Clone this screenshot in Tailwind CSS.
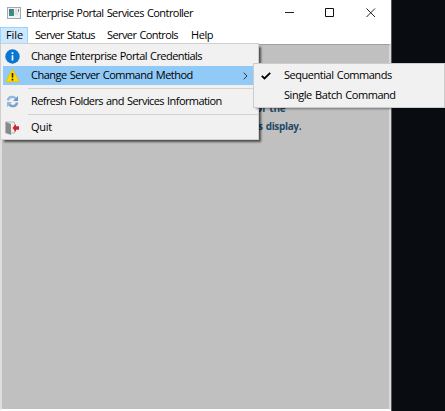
<!DOCTYPE html>
<html lang="en">
<head>
<meta charset="utf-8">
<title>Enterprise Portal Services Controller</title>
<script src="https://cdn.jsdelivr.net/npm/@tailwindcss/browser@4"></script>
</head>
<body class="w-[445px] h-[411px] overflow-hidden bg-[#090d11] font-['Open_Sans','Noto_Sans',sans-serif] text-[11px] text-black whitespace-nowrap [word-spacing:0.8px]">
<div class="relative w-[445px] h-[411px]">
  <main class="flex flex-col w-[392px] h-[411px] bg-white border-r border-[#55585b]">
    <header class="flex h-[26px] items-center pl-[7px]">
      <svg class="w-[14px] h-[12px] shrink-0" viewBox="0 0 14 12"><rect x=".5" y=".5" width="13" height="11" fill="#f1f3f3" stroke="#a5a9ac"/><rect x="2" y="2" width="5" height="7" fill="#3e8f78"/><path d="M2 2h3v3H2z" fill="#4777a4"/><path d="M8 3h2M8 5h2M8 7h3" stroke="#c5cacd"/><path d="M11 2h1v3h-1z" fill="#6986a5"/></svg>
      <h1 class="ml-[5px] w-[257px] tracking-[-0.56px]">Enterprise Portal Services Controller</h1>
      <div class="flex items-center gap-[30px] ml-[2px]">
        <svg class="w-[10px] h-[10px]" viewBox="0 0 10 10"><path d="M0 4.5h9" stroke="#222"/></svg>
        <svg class="w-[10px] h-[10px]" viewBox="0 0 10 10"><path d="M.5.5h8v8h-8z" fill="none" stroke="#111"/></svg>
        <svg class="w-[10px] h-[10px] ml-[1px]" viewBox="0 0 10 10"><path d="M.5.5l8.500 8.500M9 .5L.5 9" stroke="#222"/></svg>
      </div>
    </header>
    <nav class="flex h-[18px] items-center">
      <span class="flex items-center w-[28px] h-[17px] pl-[5px] bg-[#cce8ff] border border-[#99d1ff] tracking-[-0.1px]">File</span>
      <span class="ml-[7px] w-[72px] tracking-[-0.66px]">Server Status</span>
      <span class="w-[84px] tracking-[-0.59px]">Server Controls</span>
      <span class="tracking-[-0.4px]">Help</span>
    </nav>
    <section class="grow bg-[#c0c0c0] border-x-2 border-b-[1px] border-t border-l-[#dedede] border-r-[#dadada] border-b-[#ffffff] border-t-[#a0a0a0] mb-[1px]">
      <div class="pl-[251px] pt-[54px] font-bold text-[#1f4967] leading-[18px] text-[10px]">
        <p class="pl-[3px] tracking-[-0.1px]">of the</p>
        <p class="pl-[5px] tracking-[-0.35px]">s display.</p>
      </div>
    </section>
  </main>

  <div class="absolute left-0 top-[43px] w-[259px] h-[97px] bg-[#f1f1f1] border border-[#cfcfcf] shadow-[3px_3px_2px_-1px_rgba(0,0,0,0.6)] pt-[3px] pl-px">
    <div class="flex items-center h-[19px] pl-[3px]">
      <svg class="w-[15px] h-[15px]" viewBox="0 0 15 15"><circle cx="7.500" cy="7.500" r="7.200" fill="#0877d1"/><path d="M7.500 6.300v5.200M7.500 3.200v1.900" stroke="#fff" stroke-width="1.700"/></svg>
      <span class="ml-[11px] tracking-[-0.56px]">Change Enterprise Portal Credentials</span>
    </div>
    <div class="flex items-center h-[19px] ml-px pl-[2px] bg-[#91c9f7]">
      <svg class="w-[15px] h-[15px]" viewBox="0 0 15 15"><path d="M7.500 1L14.200 13.700H.8z" fill="#fd0" stroke="#f2bd00" stroke-width=".8" stroke-linejoin="round"/><path d="M7.500 5v4.500M7.500 10.700v1.700" stroke="#222" stroke-width="1.600"/></svg>
      <span class="ml-[11px] w-[212px] tracking-[-0.51px]">Change Server Command Method</span>
      <svg class="w-[5px] h-[8px]" viewBox="0 0 5 8"><path d="M.7.700L4 4 .7 7.300" fill="none" stroke="#333"/></svg>
    </div>
    <div class="h-px mt-[3px] ml-[26px] bg-[#d2d2d2]"></div>
    <div class="flex items-center h-[19px] mt-[3px] pl-[4px]">
      <svg class="w-[13px] h-[13px]" viewBox="0 0 13 13" fill="none" stroke="#85a9d3" stroke-width="2.400"><path d="M2 5.500C2.500 1.500 7 .9 10 3.500" stroke="#92b8e0"/><path d="M11 7.500C10.500 11.500 6 12.100 3 9.500" stroke="#7d9fc8"/><path d="M12 1v5H7z" fill="#6d97ca" stroke="none"/><path d="M1 12V7H6z" fill="#92b8e0" stroke="none"/></svg>
      <span class="ml-[12px] tracking-[-0.58px]">Refresh Folders and Services Information</span>
    </div>
    <div class="h-px mt-[3px] ml-[26px] bg-[#d2d2d2]"></div>
    <div class="flex items-center h-[19px] mt-[3px] pl-[3px]">
      <svg class="w-[15px] h-[14px]" viewBox="0 0 15 14"><path d="M.5 1h9v11h-9z" fill="#ededed" stroke="#b5b5b5"/><path d="M1 1l5 2v11l-5-2z" fill="#8a8a8a"/><path d="M7.500 7L11 3v2.200h3v3.600h-3V11z" fill="#d51f29"/></svg>
      <span class="ml-[11px] tracking-[-0.3px]">Quit</span>
    </div>
  </div>

  <div class="absolute left-[253px] top-[63px] w-[192px] h-[45px] bg-[#f1f1f1] border border-[#cccccc] shadow-[2px_2px_2px_-1px_rgba(0,0,0,0.4)] pt-[2px]">
    <div class="flex items-center h-[19px] pl-[7px]">
      <svg class="w-[10px] h-[8px]" viewBox="0 0 10 8"><path d="M.8 3.800L3.500 6.500 9.200.8" fill="none" stroke="#000" stroke-width="1.800"/></svg>
      <span class="ml-[13px] tracking-[-0.47px]">Sequential Commands</span>
    </div>
    <div class="flex items-center h-[20px] pl-[30px] tracking-[-0.44px]">Single Batch Command</div>
  </div>
</div>
</body>
</html>
